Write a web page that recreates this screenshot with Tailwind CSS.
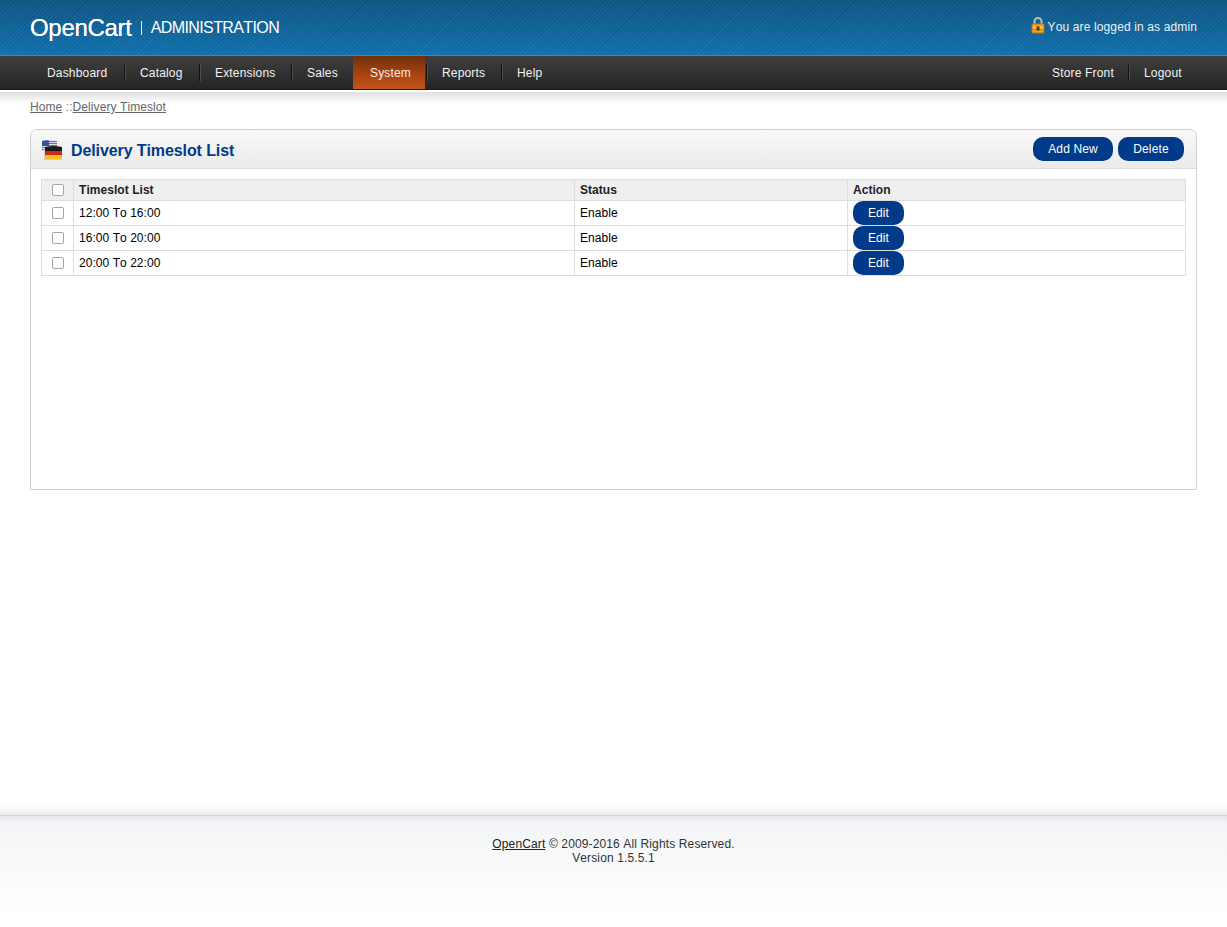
<!DOCTYPE html>
<html><head><meta charset="utf-8"><script src="https://cdn.jsdelivr.net/npm/@tailwindcss/browser@4"></script></head>
<body class="bg-white font-['Liberation_Sans',Arial,sans-serif] text-[12px] tracking-[0.13px] [font-kerning:none] text-[#000]">
<div class="h-[927px] w-[1227px] overflow-hidden flex flex-col">
<header class="h-[55px] shrink-0 flex items-center justify-between pl-[30px] pr-[30px] bg-[repeating-linear-gradient(135deg,rgba(255,255,255,0.035)_0px,rgba(255,255,255,0.035)_1.5px,rgba(0,0,0,0.035)_1.5px,rgba(0,0,0,0.035)_3px),linear-gradient(180deg,#0f5583_0%,#0f72b0_100%)]">
  <div class="flex items-center text-white">
    <span class="text-[24px] leading-none font-normal tracking-[-0.3px] [text-shadow:0_0_0.5px_#fff]">OpenCart</span>
    <span class="ml-[9px] h-[14px] w-px bg-white/90"></span>
    <span class="ml-[9px] text-[16px] leading-none tracking-[-0.6px]">ADMINISTRATION</span>
  </div>
  <div class="flex items-center text-[#e8f0f6] mb-[2px]">
    <svg class="mr-[3px] -mt-[2px]" width="14" height="17" viewBox="0 0 14 17"><path d="M3.500 8V4.500a3.500 3.500 0 0 1 7 0V8" fill="none" stroke="#b9bec2" stroke-width="2"/><rect x="1" y="7" width="12" height="9" rx="1" fill="#f0a92a" stroke="#b5740f"/><rect x="2" y="10" width="10" height="1" fill="#fbd675"/><rect x="2" y="12.500" width="10" height="1" fill="#c9820f"/><rect x="5.500" y="9.500" width="3" height="4" fill="#5a3a0a"/></svg>
    <span>You are logged in as admin</span>
  </div>
</header>
<div class="h-px shrink-0 bg-[#4a86ad]"></div>
<nav class="h-[34px] shrink-0 flex justify-between items-stretch pl-[32px] pr-[29px] tracking-[0.17px] text-[#f2f2f2] bg-[linear-gradient(180deg,#3d3d3d_0%,#3b3b3b_15%,#242424_100%)] border-b border-[#1c1c1c]">
  <ul class="flex items-stretch">
    <li class="flex items-center w-[92px] pl-[15px]">Dashboard</li>
    <li class="my-[8px] w-[2px] bg-[#111] border-r border-[#4e4e4e]"></li>
    <li class="flex items-center w-[73px] pl-[14px]">Catalog</li>
    <li class="my-[8px] w-[2px] bg-[#111] border-r border-[#4e4e4e]"></li>
    <li class="flex items-center w-[90px] pl-[14px]">Extensions</li>
    <li class="my-[8px] w-[2px] bg-[#111] border-r border-[#4e4e4e]"></li>
    <li class="flex items-center w-[60px] pl-[14px]">Sales</li>
    <li class="flex items-center w-[72px] pl-[17px] bg-[linear-gradient(180deg,#70300e_0%,#a8440f_55%,#c2541a_100%)] text-[#f6eee9]">System</li>
    <li class="ml-px my-[8px] w-[2px] bg-[#111] border-r border-[#4e4e4e]"></li>
    <li class="flex items-center w-[73px] pl-[14px]">Reports</li>
    <li class="my-[8px] w-[2px] bg-[#111] border-r border-[#4e4e4e]"></li>
    <li class="flex items-center pl-[14px]">Help</li>
  </ul>
  <ul class="flex items-stretch">
    <li class="flex items-center w-[76px]">Store Front</li>
    <li class="my-[8px] w-[2px] bg-[#111] border-r border-[#4e4e4e]"></li>
    <li class="flex items-center w-[68px] pl-[14px]">Logout</li>
  </ul>
</nav>
<div class="h-[2px] shrink-0 bg-white"></div>
<main class="flex-1 min-h-0 px-[30px] bg-[linear-gradient(180deg,#dedede_0px,#ffffff_11px)]">
  <div class="pt-[8px] h-[37px] tracking-[0.08px] text-[#7a7a7a] leading-[14px]"><a class="underline text-[#666]">Home</a> ::<a class="underline text-[#666]">Delivery Timeslot</a></div>
  <section class="h-[361px] border border-[#cfcfcf] rounded-t-[7px] flex flex-col">
    <div class="h-[39px] shrink-0 rounded-t-[7px] bg-[linear-gradient(180deg,#f8f8f8,#ebebeb)] border-b border-[#dcdcdc] flex items-center justify-between pl-[10px] pr-[12px]">
      <div class="flex items-center">
        <svg width="22" height="20" viewBox="0 0 22 20" class="mr-[8px] mt-[2px]">
          <path d="M1 1q7-2 15 0v10H1z" fill="#dcdce8"/>
          <path d="M1 1q3-1 7-.5V6H1z" fill="#3a4f9e"/>
          <path d="M8 1.500h8M8 3.500h8M8 5.500h8M1 7.500h15M1 9.500h15" stroke="#d24a4a" stroke-width="1"/>
          <path d="M3 8h18v12H3z" fill="#cfcfc8"/>
          <path d="M4 7q8-2 17 0v4H4z" fill="#1a1a1a"/>
          <path d="M4 11h17v4H4z" fill="#d3241c"/>
          <path d="M4 15h17v3.500q-8 1-17 0z" fill="#f2c40f"/>
        </svg>
        <h1 class="text-[16px] font-bold text-[#003a88] tracking-[-0.1px] leading-none mt-[4px]">Delivery Timeslot List</h1>
      </div>
      <div class="flex gap-[5px]">
        <a class="h-[24px] w-[80px] rounded-[10px] bg-[#003a88] text-white flex items-center justify-center">Add New</a>
        <a class="h-[24px] w-[66px] rounded-[10px] bg-[#003a88] text-white flex items-center justify-center">Delete</a>
      </div>
    </div>
    <div class="pt-[10px] px-[10px]">
      <table class="w-[1145px] border-collapse table-fixed tracking-[0.05px]">
        <colgroup><col class="w-[32px]"><col class="w-[501px]"><col class="w-[273px]"><col></colgroup>
        <thead>
          <tr class="h-[21px] bg-[#efefef] font-bold text-[#222]">
            <td class="border border-[#dddddd]"><input type="checkbox" class="appearance-none block mx-auto w-[12px] h-[12px] bg-white border border-[#a5a5a5] rounded-[2px]"></td>
            <td class="border border-[#dddddd] px-[5px]">Timeslot List</td>
            <td class="border border-[#dddddd] px-[5px]">Status</td>
            <td class="border border-[#dddddd] px-[5px]">Action</td>
          </tr>
        </thead>
        <tbody>
          <tr class="h-[25px]">
            <td class="border border-[#dddddd]"><input type="checkbox" class="appearance-none block mx-auto w-[12px] h-[12px] bg-white border border-[#a5a5a5] rounded-[2px]"></td>
            <td class="border border-[#dddddd] px-[5px]">12:00 To 16:00</td>
            <td class="border border-[#dddddd] px-[5px]">Enable</td>
            <td class="border border-[#dddddd] px-[5px] py-0"><a class="h-[24px] w-[51px] rounded-[10px] bg-[#003a88] text-white flex items-center justify-center">Edit</a></td>
          </tr>
          <tr class="h-[25px]">
            <td class="border border-[#dddddd]"><input type="checkbox" class="appearance-none block mx-auto w-[12px] h-[12px] bg-white border border-[#a5a5a5] rounded-[2px]"></td>
            <td class="border border-[#dddddd] px-[5px]">16:00 To 20:00</td>
            <td class="border border-[#dddddd] px-[5px]">Enable</td>
            <td class="border border-[#dddddd] px-[5px] py-0"><a class="h-[24px] w-[51px] rounded-[10px] bg-[#003a88] text-white flex items-center justify-center">Edit</a></td>
          </tr>
          <tr class="h-[25px]">
            <td class="border border-[#dddddd]"><input type="checkbox" class="appearance-none block mx-auto w-[12px] h-[12px] bg-white border border-[#a5a5a5] rounded-[2px]"></td>
            <td class="border border-[#dddddd] px-[5px]">20:00 To 22:00</td>
            <td class="border border-[#dddddd] px-[5px]">Enable</td>
            <td class="border border-[#dddddd] px-[5px] py-0"><a class="h-[24px] w-[51px] rounded-[10px] bg-[#003a88] text-white flex items-center justify-center">Edit</a></td>
          </tr>
        </tbody>
      </table>
    </div>
  </section>
</main>
<footer class="h-[112px] shrink-0 relative border-t border-[#cfd2d7] bg-[linear-gradient(180deg,#e4e6e9_0px,#f3f5f7_8px,#ffffff_98px)] text-center text-[#333] leading-[14px] pt-[21px]">
  <div class="absolute left-0 right-0 -top-[12px] h-[11px] bg-[linear-gradient(180deg,#ffffff,#eceef1)]"></div>
  <div><a class="underline text-[#222]">OpenCart</a> © 2009-2016 All Rights Reserved.</div>
  <div>Version 1.5.5.1</div>
</footer>
</div>
</body></html>
